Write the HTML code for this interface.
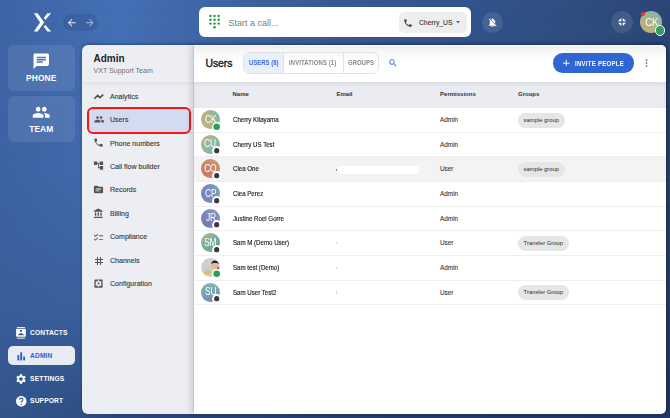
<!DOCTYPE html>
<html><head><meta charset="utf-8">
<style>
*{box-sizing:border-box;margin:0;padding:0}
html,body{width:670px;height:418px;overflow:hidden}
body{position:relative;font-family:"Liberation Sans",sans-serif;
background:linear-gradient(90deg,#33558b 0%,#2f4f84 12%,#2a487c 17%,#253e6b 60%,#21386a 100%);
}
body::before{content:"";position:absolute;left:0;top:0;width:670px;height:418px;
background:linear-gradient(90deg,#3d64a5 0%,#4570b5 18%,#4068ab 27%,#38598f 50%,#31528b 72%,#304e80 85%,#2b4575 100%);
-webkit-mask-image:linear-gradient(180deg,#000 0%,rgba(0,0,0,0.9) 40%,rgba(0,0,0,0.55) 75%,rgba(0,0,0,0) 100%);
mask-image:linear-gradient(180deg,#000 0%,rgba(0,0,0,0.9) 40%,rgba(0,0,0,0.55) 75%,rgba(0,0,0,0) 100%);}
.abs{position:absolute}
svg{display:block}
.navbox{position:absolute;left:7.5px;width:67.5px;border-radius:6px;background:rgba(255,255,255,0.09)}
.navlbl{position:absolute;left:0;width:100%;text-align:center;color:#fff;font-weight:bold;font-size:8.4px;letter-spacing:0.1px}
.bn{position:absolute;left:7.5px;width:67px;height:18.5px;border-radius:5px}
.bn .t{position:absolute;left:22.6px;top:0;line-height:18.5px;font-size:6.7px;font-weight:bold;color:#fff;letter-spacing:0.1px}
.bn svg{position:absolute;left:8px;top:3.5px}
#admin{position:absolute;left:82px;top:44.5px;width:112px;height:369px;box-shadow:0 -1px 4px rgba(0,0,0,0.14),0 -1px 2px rgba(0,0,0,0.18);background:#eceef4;border-radius:6px 0 0 6px}
#main{position:absolute;left:193.5px;top:44.5px;width:472.7px;height:369.5px;background:#fff;border-radius:0 5px 5px 0;box-shadow:-3px -1px 6px rgba(0,0,0,0.14),0 -1px 2px rgba(0,0,0,0.18),3px 0 4px rgba(0,0,0,0.2)}
.li{position:absolute;left:0;width:112px;height:23px}
.li svg{position:absolute;left:11px}
.li .t{position:absolute;left:28px;font-size:7.05px;color:#383838;line-height:23px;top:-0.5px;-webkit-text-stroke:0.12px #383838}
.row{position:absolute;left:0;width:472.7px;height:24.65px;border-bottom:1px solid #efefef}
.row .nm{position:absolute;left:39px;top:0;line-height:23.6px;font-size:6.7px;white-space:nowrap;color:#2a2a2a;-webkit-text-stroke:0.18px #2a2a2a;transform:scaleX(0.915);transform-origin:0 50%}
.row .pm{position:absolute;left:246.5px;top:0;line-height:24px;font-size:6.4px;color:#333;-webkit-text-stroke:0.08px #333}
.chip{position:absolute;left:324.5px;top:4.8px;height:15px;border-radius:7.5px;background:#e6e6e6;font-size:5.85px;color:#2e2e2e;line-height:15px;padding:0 5.6px}
.av{position:absolute;left:7.7px;top:2.1px;width:18.9px;height:18.9px;border-radius:50%;color:#fff;font-size:10px;line-height:18.9px;text-align:center;letter-spacing:-0.2px;overflow:hidden}
.av span{display:inline-block;transform:scaleX(0.84);margin-left:-0.3px;position:relative;top:0.6px}
.dot{position:absolute;left:18.8px;top:13.5px}
.dot.on{background:radial-gradient(circle at 50% 50%,#2e9e5b 0,#2e9e5b 3.3px,#fff 3.7px)}
.dot.off{background:radial-gradient(circle at 50% 50%,#383838 0,#383838 2.6px,#fff 3.0px)}
.th{position:absolute;top:0;line-height:25.5px;font-size:6px;font-weight:bold;color:#333}
</style></head>
<body>

<!-- logo -->
<svg class="abs" style="left:28px;top:8px" width="30" height="30" viewBox="0 0 418 418">
 <polygon fill="#fff" points="82,74 134,74 226,202 134,329 82,329 168,202"/>
 <polygon fill="#fff" points="270,74 322,74 241,166 220,141"/>
 <polygon fill="#fff" points="220,262 241,237 322,329 270,329"/>
</svg>
<!-- arrows pill -->
<div class="abs" style="left:63px;top:13.7px;width:35.2px;height:17.5px;border-radius:9px;background:rgba(20,40,90,0.14)"></div>
<svg class="abs" style="left:65.75px;top:17.1px" width="11.5" height="11.5" viewBox="0 0 24 24"><path fill="rgba(255,255,255,0.92)" d="M20 11H7.83l5.59-5.59L12 4l-8 8 8 8 1.41-1.41L7.83 13H20v-2z"/></svg>
<svg class="abs" style="left:83.85px;top:17.1px" width="11.5" height="11.5" viewBox="0 0 24 24"><path fill="rgba(255,255,255,0.55)" d="M12 4l-1.41 1.41L16.17 11H4v2h12.17l-5.58 5.59L12 20l8-8z"/></svg>

<!-- phone / team -->
<div class="navbox" style="top:44.5px;height:46.8px">
 <svg class="abs" style="left:24.1px;top:7.9px" width="18.5" height="18.5" viewBox="0 0 24 24"><path fill="#fff" d="M20 2H4c-1.1 0-1.99.9-1.99 2L2 22l4-4h14c1.1 0 2-.9 2-2V4c0-1.1-.9-2-2-2zM6 9h12v2H6V9zm8 5H6v-2h8v2zm4-6H6V6h12v2z"/></svg>
 <div class="navlbl" style="top:27.6px;line-height:12px">PHONE</div>
</div>
<div class="navbox" style="top:95.6px;height:46.9px">
 <svg class="abs" style="left:24.45px;top:7.45px" width="18.5" height="18.5" viewBox="0 0 24 24"><path fill="#fff" d="M16 11c1.66 0 2.99-1.34 2.99-3S17.66 5 16 5c-1.66 0-3 1.34-3 3s1.34 3 3 3zm-8 0c1.66 0 2.99-1.34 2.99-3S9.66 5 8 5C6.34 5 5 6.34 5 8s1.34 3 3 3zm0 2c-2.33 0-7 1.17-7 3.5V19h14v-2.5c0-2.33-4.67-3.5-7-3.5zm8 0c-.29 0-.62.02-.97.05 1.16.84 1.97 1.97 1.97 3.45V19h6v-2.5c0-2.33-4.67-3.5-7-3.5z"/></svg>
 <div class="navlbl" style="top:27.2px;line-height:12px">TEAM</div>
</div>

<!-- bottom nav -->
<div class="bn" style="top:323.5px">
 <svg width="18" height="18" viewBox="0 0 18 18" style="top:0.5px;left:4.5px"><g fill="#fff">
 <rect x="4.9" y="3" width="8" height="0.9"/>
 <rect x="4.1" y="4.7" width="9.7" height="8" rx="0.7"/>
 <rect x="4.9" y="13.7" width="8" height="0.9"/></g>
 <g fill="#34578f"><circle cx="8.95" cy="6.9" r="1.05"/><path d="M6.1 10.9c0-1.1 1.9-1.6 2.85-1.6s2.85.5 2.85 1.6v.3H6.1z"/></g></svg>
 <div class="t">CONTACTS</div>
</div>
<div class="bn" style="top:346.2px;height:18.7px;background:#e9ebf3">
 <svg width="20" height="18" viewBox="0 0 20 18" style="top:0.4px;left:0"><g fill="#2c62cf"><rect x="9.4" y="8.1" width="1.9" height="5.3"/><rect x="12.25" y="5.3" width="1.9" height="8.1"/><rect x="15.2" y="9.6" width="1.9" height="3.8"/></g></svg>
 <div class="t" style="color:#2c62cf;top:0.7px">ADMIN</div>
</div>
<div class="bn" style="top:369px">
 <svg width="12" height="12" viewBox="0 0 24 24" style="top:3.7px;left:7.4px"><path fill="#fff" d="M19.14 12.94c.04-.3.06-.61.06-.94 0-.32-.02-.64-.07-.94l2.03-1.58c.18-.14.23-.41.12-.61l-1.92-3.32c-.12-.22-.37-.29-.59-.22l-2.39.96c-.5-.38-1.03-.7-1.62-.94l-.36-2.54c-.04-.24-.24-.41-.48-.41h-3.84c-.24 0-.43.17-.47.41l-.36 2.54c-.59.24-1.13.57-1.62.94l-2.39-.96c-.22-.08-.47 0-.59.22L2.74 8.87c-.12.21-.08.47.12.61l2.03 1.58c-.05.3-.09.63-.09.94s.02.64.07.94l-2.03 1.58c-.18.14-.23.41-.12.61l1.92 3.32c.12.22.37.29.59.22l2.39-.96c.5.38 1.03.7 1.62.94l.36 2.54c.05.24.24.41.48.41h3.84c.24 0 .44-.17.47-.41l.36-2.54c.59-.24 1.13-.56 1.62-.94l2.39.96c.22.08.47 0 .59-.22l1.92-3.32c.12-.22.07-.47-.12-.61l-2.01-1.58zM12 15.6c-1.98 0-3.6-1.62-3.6-3.6s1.62-3.6 3.6-3.6 3.6 1.62 3.6 3.6-1.62 3.6-3.6 3.6z"/></svg>
 <div class="t" style="top:0.5px">SETTINGS</div>
</div>
<div class="bn" style="top:391.5px">
 <svg width="12.6" height="12.6" viewBox="0 0 24 24" style="top:3.6px;left:7.1px"><path fill="#fff" d="M12 2C6.48 2 2 6.48 2 12s4.48 10 10 10 10-4.48 10-10S17.52 2 12 2zm1 17h-2v-2h2v2zm2.07-7.75l-.9.92C13.45 12.9 13 13.5 13 15h-2v-.5c0-1.1.45-2.1 1.17-2.83l1.24-1.26c.37-.36.59-.86.59-1.41 0-1.1-.9-2-2-2s-2 .9-2 2H8c0-2.21 1.79-4 4-4s4 1.79 4 4c0 .88-.36 1.68-.93 2.25z"/></svg>
 <div class="t" style="top:0.5px">SUPPORT</div>
</div>

<!-- top search bar -->
<div class="abs" style="left:199px;top:7.3px;width:272px;height:30.1px;background:#fff;border-radius:6px">
 <svg class="abs" style="left:0;top:0" width="30" height="30" viewBox="0 0 30 30">
  <g fill="#2e8b3e">
   <circle cx="11.4" cy="8.9" r="1.2"/><circle cx="15.55" cy="8.9" r="1.2"/><circle cx="19.7" cy="8.9" r="1.2"/>
   <circle cx="11.4" cy="12.75" r="1.2"/><circle cx="15.55" cy="12.75" r="1.2"/><circle cx="19.7" cy="12.75" r="1.2"/>
   <circle cx="11.4" cy="16.6" r="1.2"/><circle cx="15.55" cy="16.6" r="1.2"/><circle cx="19.7" cy="16.6" r="1.2"/>
   <circle cx="15.55" cy="20.3" r="1.2"/>
  </g>
 </svg>
 <div class="abs" style="left:29.5px;top:0.6px;line-height:30px;font-size:9px;color:#7c7c7c">Start a call...</div>
 <div class="abs" style="left:200px;top:4.6px;width:67.5px;height:21px;border-radius:5px;background:#eeeeee">
  <svg class="abs" style="left:3.5px;top:6px" width="10" height="10" viewBox="0 0 24 24"><path fill="#444" d="M6.62 10.79c1.44 2.83 3.76 5.14 6.59 6.59l2.2-2.2c.27-.27.67-.36 1.02-.24 1.12.37 2.33.57 3.57.57.55 0 1 .45 1 1V20c0 .55-.45 1-1 1-9.39 0-17-7.61-17-17 0-.55.45-1 1-1h3.5c.55 0 1 .45 1 1 0 1.25.2 2.45.57 3.57.11.35.03.74-.25 1.02l-2.2 2.2z"/></svg>
  <div class="abs" style="left:20px;top:0.2px;line-height:21px;font-size:6.75px;color:#333;-webkit-text-stroke:0.1px #333">Cherry_US</div>
  <svg class="abs" style="left:57.2px;top:9.6px" width="4" height="2.6" viewBox="0 0 10 6"><path fill="#666" d="M0 0h10L5 6z"/></svg>
 </div>
</div>

<!-- bell -->
<div class="abs" style="left:482.1px;top:11.6px;width:21.4px;height:21.4px;border-radius:50%;background:rgba(255,255,255,0.1)"></div>
<svg class="abs" style="left:486.9px;top:16.5px" width="11" height="11" viewBox="0 0 24 24"><path fill="#fff" d="M20 18.69L7.84 6.14 5.27 3.49 4 4.76l2.8 2.8v.01c-.52.99-.8 2.16-.8 3.42v5l-2 2v1h13.73l2 2L21 19.72l-1-1.03zM12 22c1.11 0 2-.89 2-2h-4c0 1.11.89 2 2 2zm6-7.32V11c0-3.08-1.64-5.64-4.5-6.32V4c0-.83-.67-1.5-1.5-1.5s-1.5.67-1.5 1.5v.68c-.15.03-.29.08-.42.12-.1.03-.2.07-.3.11h-.01c-.01 0-.01 0-.02.01-.23.09-.46.2-.68.31 0 0-.01 0-.01.01L18 14.68z"/></svg>

<!-- compress -->
<div class="abs" style="left:610.8px;top:11.3px;width:22px;height:22px;border-radius:50%;background:rgba(255,255,255,0.1)"></div>
<svg class="abs" style="left:612px;top:12px" width="20" height="20" viewBox="0 0 20 20"><g fill="#fff">
 <polygon points="6,9.3 9.3,9.3 9.3,6"/><polygon points="10.7,6 10.7,9.3 14,9.3"/>
 <polygon points="6,10.8 9.3,10.8 9.3,14.1"/><polygon points="10.7,10.8 14,10.8 10.7,14.1"/></g></svg>

<!-- avatar top -->
<div class="abs" style="left:639.8px;top:10.8px;width:22.6px;height:22.6px;border-radius:50%;background:linear-gradient(215deg,#7db4b2 0%,#a6b48f 45%,#cdae70 100%);color:#fff;font-size:11.5px;line-height:22.6px;text-align:center;letter-spacing:-0.2px"><span style="display:inline-block;transform:scaleX(0.84);margin-left:0.4px;position:relative;top:0.3px">CK</span></div>
<div class="abs" style="left:654.5px;top:25.4px;width:10.4px;height:10.4px;border-radius:50%;background:#2f9d5c;border:1.5px solid #fff"></div>
<div class="abs" style="left:641.2px;top:12.2px;width:3.6px;height:3.6px;border-radius:50%;background:#e53935"></div>

<!-- ADMIN PANEL -->
<div id="admin">
 <div class="abs" style="left:0;top:0;width:112px;height:37.5px;box-shadow:0 2px 4px rgba(0,0,0,0.06);border-radius:6px 0 0 0"></div>
 <div class="abs" style="left:11.5px;top:8px;font-size:10px;font-weight:bold;color:#252525;line-height:12px">Admin</div>
 <div class="abs" style="left:11.5px;top:21.6px;font-size:7.05px;color:#6e6e6e;line-height:9px">VXT Support Team</div>

 <div class="abs" style="left:4.7px;top:62.9px;width:104.7px;height:26.8px;border:2.2px solid #f81515;border-radius:6px;background:#d2dbf0"></div>
 <div class="li" style="top:40.8px">
  <svg style="top:6.5px" width="11" height="11" viewBox="0 0 11 11"><polyline fill="none" stroke="#505050" stroke-width="1.6" stroke-linejoin="miter" points="1.3,6.8 4.7,3.4 7,5.7 10.2,2.7"/></svg>
  <div class="t">Analytics</div></div>
 <div class="li" style="top:64.2px">
  <svg style="top:5.6px;left:11.6px" width="10.6" height="10.6" viewBox="0 0 24 24"><path fill="#555" d="M16 11c1.66 0 2.99-1.34 2.99-3S17.66 5 16 5c-1.66 0-3 1.34-3 3s1.34 3 3 3zm-8 0c1.66 0 2.99-1.34 2.99-3S9.66 5 8 5C6.34 5 5 6.34 5 8s1.34 3 3 3zm0 2c-2.33 0-7 1.17-7 3.5V19h14v-2.5c0-2.33-4.67-3.5-7-3.5zm8 0c-.29 0-.62.02-.97.05 1.16.84 1.97 1.97 1.97 3.45V19h6v-2.5c0-2.33-4.67-3.5-7-3.5z"/></svg>
  <div class="t">Users</div></div>
 <div class="li" style="top:87.6px">
  <svg style="top:4.8px" width="11" height="11" viewBox="0 0 24 24"><path fill="#555" d="M6.62 10.79c1.44 2.830 3.76 5.14 6.59 6.59l2.2-2.2c.27-.27.67-.36 1.02-.24 1.12.37 2.33.57 3.57.57.55 0 1 .45 1 1V20c0 .55-.45 1-1 1-9.39 0-17-7.61-17-17 0-.55.45-1 1-1h3.5c.55 0 1 .45 1 1 0 1.25.2 2.45.57 3.57.11.35.03.74-.25 1.02l-2.2 2.2z"/></svg>
  <div class="t">Phone numbers</div></div>
 <div class="li" style="top:111px">
  <svg style="top:4.6px" width="11" height="11" viewBox="0 0 24 24"><path fill="#555" d="M22 11V3h-7v3H9V3H2v8h7V8h2v10h4v3h7v-8h-7v3h-2V8h2v3z"/></svg>
  <div class="t">Call flow builder</div></div>
 <div class="li" style="top:134.4px">
  <svg style="top:5.3px" width="11" height="11" viewBox="0 0 24 24"><path fill="#555" d="M20 6h-8l-2-2H4c-1.1 0-1.99.9-1.99 2L2 18c0 1.1.9 2 2 2h16c1.1 0 2-.9 2-2V8c0-1.1-.9-2-2-2zm-6 10H6v-2h8v2zm4-4H6v-2h12v2z"/></svg>
  <div class="t">Records</div></div>
 <div class="li" style="top:157.8px">
  <svg style="top:6px" width="11" height="11" viewBox="0 0 24 24"><path fill="#555" d="M4 10v7h3v-7H4zm6 0v7h3v-7h-3zM2 22h19v-3H2v3zm14-12v7h3v-7h-3zm-4.5-9L2 6v2h19V6l-9.5-5z"/></svg>
  <div class="t">Billing</div></div>
 <div class="li" style="top:181.2px">
  <svg style="top:6px" width="11" height="11" viewBox="0 0 24 24"><path fill="#555" d="M22 7h-9v2h9V7zm0 8h-9v2h9v-2zM5.54 11L2 7.46l1.41-1.41 2.12 2.12 4.24-4.24 1.41 1.41L5.54 11zm0 8L2 15.46l1.41-1.41 2.12 2.12 4.24-4.24 1.41 1.41L5.54 19z"/></svg>
  <div class="t">Compliance</div></div>
 <div class="li" style="top:204.6px">
  <svg style="top:5.5px;left:10.5px" width="12" height="12" viewBox="0 0 24 24"><path fill="#555" d="M20 10V8h-4V4h-2v4h-4V4H8v4H4v2h4v4H4v2h4v4h2v-4h4v4h2v-4h4v-2h-4v-4h4zm-6 4h-4v-4h4v4z"/></svg>
  <div class="t">Channels</div></div>
 <div class="li" style="top:228px">
  <svg style="top:5px" width="11" height="11" viewBox="0 0 24 24"><path fill="#555" d="M12 10c-1.1 0-2 .9-2 2s.9 2 2 2 2-.9 2-2-.9-2-2-2zm7-7H5c-1.11 0-2 .9-2 2v14c0 1.1.89 2 2 2h14c1.11 0 2-.9 2-2V5c0-1.1-.89-2-2-2zm-1.75 9c0 .23-.02.46-.05.68l1.48 1.160c.13.11.17.3.08.45l-1.4 2.42c-.09.15-.27.21-.43.15l-1.74-.7c-.36.28-.76.51-1.18.69l-.26 1.85c-.03.17-.18.3-.35.3h-2.8c-.17 0-.32-.13-.35-.29l-.26-1.85c-.43-.18-.82-.41-1.180-.69l-1.74.7c-.16.06-.34 0-.43-.15l-1.4-2.42c-.09-.15-.05-.34.08-.45l1.48-1.16c-.03-.23-.05-.46-.05-.69 0-.23.02-.46.05-.68l-1.48-1.16c-.13-.11-.17-.3-.08-.45l1.4-2.42c.09-.15.27-.21.43-.15l1.74.7c.36-.28.76-.51 1.18-.69l.26-1.85c.03-.17.18-.3.35-.3h2.8c.17 0 .32.13.35.29l.26 1.85c.43.18.82.41 1.18.69l1.74-.7c.16-.06.34 0 .43.15l1.4 2.42c.09.15.05.34-.08.45l-1.48 1.16c.03.23.05.46.05.69z"/></svg>
  <div class="t">Configuration</div></div>
</div>

<!-- MAIN PANEL -->
<div id="main"><div class="abs" style="left:0;top:0;width:472.7px;height:18px;border-radius:0 5px 0 0;background:linear-gradient(180deg,#fff 0px,#efefef 1.6px,#f6f6f6 6px,#fff 17px)"></div><div class="abs" style="left:0;top:-0.5px;width:472.7px;height:370px">

 <div class="abs" style="left:11.9px;top:12.9px;font-size:10.4px;color:#222;line-height:14px;-webkit-text-stroke:0.4px #222">Users</div>
 <div class="abs" style="left:49.9px;top:8.3px;width:135.2px;height:21.4px;border:1px solid #e3e3e3;border-radius:6px;overflow:hidden">
  <div class="abs" style="left:0;top:0;width:39.6px;height:100%;background:#eaf0fb;border-right:1px solid #e3e3e3"></div>
  <div class="abs" style="left:4.5px;top:0px;line-height:19.4px;font-size:6.5px;font-weight:bold;color:#3a6dd5;white-space:nowrap;transform:scaleX(0.92);transform-origin:0 50%">USERS (8)</div>
  <div class="abs" style="left:98.4px;top:0;width:1px;height:100%;background:#e3e3e3"></div>
  <div class="abs" style="left:44.2px;top:0px;line-height:19.4px;font-size:6.5px;letter-spacing:0.1px;font-weight:bold;color:#888;white-space:nowrap;transform:scaleX(0.92);transform-origin:0 50%">INVITATIONS (1)</div>
  <div class="abs" style="left:103.6px;top:0px;line-height:19.4px;font-size:6.5px;font-weight:bold;color:#888;white-space:nowrap;transform:scaleX(0.92);transform-origin:0 50%">GROUPS</div>
 </div>
 <svg class="abs" style="left:194px;top:14px" width="10" height="10" viewBox="0 0 24 24"><path fill="#2f6bd3" d="M15.5 14h-.79l-.28-.27C15.41 12.59 16 11.11 16 9.5 16 5.91 13.09 3 9.5 3S3 5.91 3 9.5 5.91 16 9.5 16c1.61 0 3.09-.59 4.23-1.57l.27.28v.79l5 4.99L20.49 19l-4.99-5zm-6 0C7.01 14 5 11.99 5 9.5S7.01 5 9.5 5 14 7.01 14 9.5 11.99 14 9.5 14z"/></svg>
 <div class="abs" style="left:359.3px;top:9.4px;width:80.8px;height:19.4px;border-radius:9.7px;background:#2f66d3"></div>
 <svg class="abs" style="left:369.5px;top:15.9px" width="6.5" height="6.5" viewBox="0 0 12 12"><path fill="#fff" d="M5.1 0h1.8v5.1H12v1.8H6.9V12H5.1V6.9H0V5.1h5.1z"/></svg>
 <div class="abs" style="left:381.8px;top:9.75px;line-height:19px;font-size:6.9px;font-weight:bold;color:#fff;letter-spacing:0.32px;white-space:nowrap;transform:scaleX(0.87);transform-origin:0 50%">INVITE PEOPLE</div>
 <svg class="abs" style="left:450px;top:15.3px" width="5" height="8" viewBox="0 0 5 8"><g fill="#555"><circle cx="2.5" cy="1" r="0.85"/><circle cx="2.5" cy="4" r="0.85"/><circle cx="2.5" cy="7" r="0.85"/></g></svg>
 <div class="abs" style="left:0;top:38px;width:472.7px;height:25.5px;background:#ebecf1;box-shadow:inset 0 2px 4px rgba(0,0,0,0.075)">
  <div class="th" style="left:39px">Name</div>
  <div class="th" style="left:143px">Email</div>
  <div class="th" style="left:246.6px">Permissions</div>
  <div class="th" style="left:324.5px">Groups</div>
 </div>
 <div class="row" style="top:64.05px;">
  <div class="av" style="background:linear-gradient(70deg,#c9ae74 0%,#a9b48c 50%,#7fb3ad 100%)"><span>CK</span></div>
  <svg class="dot" width="9.4" height="9.4" viewBox="0 0 10 10"><circle cx="5" cy="5" r="4.9" fill="#fff"/><circle cx="5" cy="5" r="3.5" fill="#2e9e5b"/></svg>
  <div class="nm">Cherry Kitayama</div>
  <div class="pm">Admin</div>
  <div class="chip">sample group</div>
 </div>
 <div class="row" style="top:88.70px;">
  <div class="av" style="background:linear-gradient(135deg,#c2b07a 0%,#8fb8a9 55%,#74aeb0 100%)"><span>CU</span></div>
  <svg class="dot" width="9.4" height="9.4" viewBox="0 0 10 10"><circle cx="5" cy="5" r="4.9" fill="#fff"/><circle cx="5" cy="5" r="2.75" fill="#3a3a3a"/></svg>
  <div class="nm">Cherry US Test</div>
  <div class="pm">Admin</div>
 </div>
 <div class="row" style="top:113.35px;background:#f3f3f3;">
  <div class="av" style="background:linear-gradient(45deg,#c47766 0%,#c88a6c 60%,#c9a872 100%)"><span>CO</span></div>
  <svg class="dot" width="9.4" height="9.4" viewBox="0 0 10 10"><circle cx="5" cy="5" r="4.9" fill="#fff"/><circle cx="5" cy="5" r="2.75" fill="#3a3a3a"/></svg>
  <div class="nm">Clea One</div>
  <div class="abs" style="left:143.2px;top:8.4px;width:82.7px;height:8.2px;border-radius:4.1px;background:#fff"></div>
  <div class="abs" style="left:142.6px;top:11.3px;width:0.7px;height:2px;background:#888"></div>
  <div class="pm">User</div>
  <div class="chip">sample group</div>
 </div>
 <div class="row" style="top:138.00px;">
  <div class="av" style="background:linear-gradient(250deg,#73adb0 0%,#7b8fc0 40%,#7282b8 100%)"><span>CP</span></div>
  <svg class="dot" width="9.4" height="9.4" viewBox="0 0 10 10"><circle cx="5" cy="5" r="4.9" fill="#fff"/><circle cx="5" cy="5" r="2.75" fill="#3a3a3a"/></svg>
  <div class="nm">Clea Perez</div>
  <div class="pm">Admin</div>
 </div>
 <div class="row" style="top:162.65px;">
  <div class="av" style="background:linear-gradient(225deg,#8a9cc8 0%,#7683b8 60%,#6f7aac 100%)"><span>JR</span></div>
  <svg class="dot" width="9.4" height="9.4" viewBox="0 0 10 10"><circle cx="5" cy="5" r="4.9" fill="#fff"/><circle cx="5" cy="5" r="2.75" fill="#3a3a3a"/></svg>
  <div class="nm">Justine Roel Gorre</div>
  <div class="pm">Admin</div>
 </div>
 <div class="row" style="top:187.30px;">
  <div class="av" style="background:linear-gradient(135deg,#b7b48a 0%,#7fae9c 45%,#5f9f93 100%)"><span>SM</span></div>
  <svg class="dot" width="9.4" height="9.4" viewBox="0 0 10 10"><circle cx="5" cy="5" r="4.9" fill="#fff"/><circle cx="5" cy="5" r="2.75" fill="#3a3a3a"/></svg>
  <div class="nm">Sam M (Demo User)</div>
  <div class="abs" style="left:142.4px;top:10.6px;width:0.8px;height:2.4px;background:#d4d4d4"></div>
  <div class="pm">User</div>
  <div class="chip">Transfer Group</div>
 </div>
 <div class="row" style="top:211.95px;">
  <div class="av" style="background:#d0d0d0"><svg width="18.9" height="18.9" viewBox="0 0 18.9 18.9">
 <ellipse cx="13.9" cy="8.2" rx="3.4" ry="3.2" fill="#e8b99a"/>
 <path d="M10.3 6.2c0-2.4 1.6-3.6 3.6-3.6s3.8 1.2 3.8 3.6c-.6-.9-1.5-1.3-3.7-1.3s-3.1.4-3.7 1.3z" fill="#222"/>
 <path d="M16.6 8.5c.9.6 1.2 1.8.9 2.8l-1.2-.4z" fill="#333"/>
 <ellipse cx="5.4" cy="11" rx="3.8" ry="2" fill="#b9cfe6"/>
 <path d="M3.3 12.6h6.2l-.4 3.6H3.8z" fill="#f0c030"/>
 </svg></div>
  <svg class="dot" width="9.4" height="9.4" viewBox="0 0 10 10"><circle cx="5" cy="5" r="4.9" fill="#fff"/><circle cx="5" cy="5" r="3.5" fill="#2e9e5b"/></svg>
  <div class="nm">Sam test (Demo)</div>
  <div class="abs" style="left:142.4px;top:10.6px;width:0.8px;height:2.4px;background:#d4d4d4"></div>
  <div class="pm">Admin</div>
 </div>
 <div class="row" style="top:236.60px;">
  <div class="av" style="background:linear-gradient(180deg,#7fb5b5 0%,#74a3b3 60%,#7b85b4 100%)"><span>SU</span></div>
  <svg class="dot" width="9.4" height="9.4" viewBox="0 0 10 10"><circle cx="5" cy="5" r="4.9" fill="#fff"/><circle cx="5" cy="5" r="2.75" fill="#3a3a3a"/></svg>
  <div class="nm">Sam User Test2</div>
  <div class="abs" style="left:142.4px;top:10.6px;width:0.8px;height:2.4px;background:#d4d4d4"></div>
  <div class="pm">User</div>
  <div class="chip">Transfer Group</div>
 </div>
</div></div>

</body></html>
